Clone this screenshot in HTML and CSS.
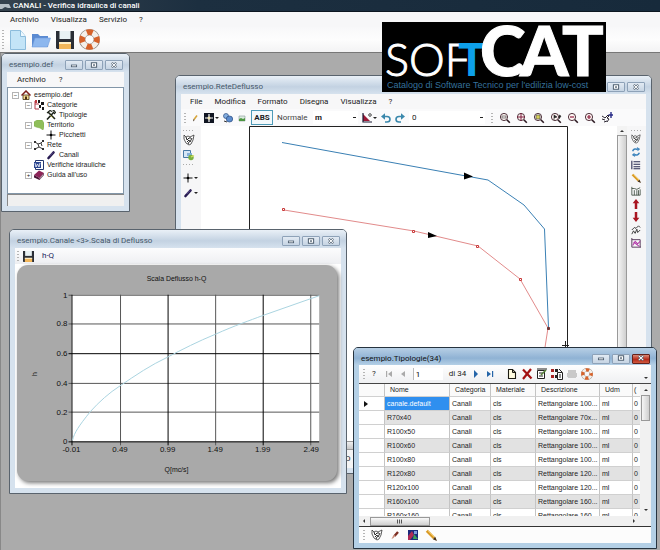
FILE: index.html
```html
<!DOCTYPE html>
<html lang="it">
<head>
<meta charset="utf-8">
<title>CANALI - Verifica idraulica di canali</title>
<link rel="stylesheet" href="styles.css">
</head>
<body>
<svg class="defs" aria-hidden="true">
  <symbol id="min" viewBox="0 0 18 10"><rect x="6" y="5" width="6" height="2" fill="#fff" stroke="#3d4f61" stroke-width=".8"/></symbol>
  <symbol id="max" viewBox="0 0 18 10"><rect x="6" y="2.500" width="6" height="5" fill="#fff" stroke="#3d4f61"/><rect x="8" y="4.300" width="2" height="1.500" fill="#3d4f61"/></symbol>
  <symbol id="cls" viewBox="0 0 18 10"><path d="M6.500 2.500l5 5M11.500 2.500l-5 5" stroke="#3d4f61" stroke-width="2.600"/><path d="M6.500 2.500l5 5M11.500 2.500l-5 5" stroke="#fff" stroke-width="1.200"/></symbol>
  <symbol id="page" viewBox="0 0 16 20"><path d="M.5.5h10l5 6v13H.5z" fill="#c3e4f7" stroke="#8cbcdc"/><path d="M10.500.5v6h5" fill="#eef9ff" stroke="#8cbcdc"/></symbol>
  <symbol id="folder" viewBox="0 0 20 16"><path d="M1 15V2h6l2 2h8v11z" fill="#5b8bd2"/><path d="M1 15L4 6h15.500l-3 9z" fill="#8db7ee" stroke="#6f9bdb" stroke-width=".6"/></symbol>
  <symbol id="disk" viewBox="0 0 18 18"><path d="M0 0h18v18H1L0 17z" fill="#2b2e35"/><path d="M3.500 0h11v8h-11z" fill="#e8f1f3"/><path d="M3 12h12v6H3z" fill="#f2b65a"/><path d="M3 11h12v2H3z" fill="#fff0c8"/></symbol>
  <symbol id="ring" viewBox="0 0 20 20"><circle cx="10" cy="10" r="7" fill="none" stroke="#8a7f78" stroke-width="6"/><circle cx="10" cy="10" r="7" fill="none" stroke="#f4efe9" stroke-width="5"/><circle cx="10" cy="10" r="7" fill="none" stroke="#d6622a" stroke-width="5.500" stroke-dasharray="5.500 5.500" stroke-dashoffset="2.750"/></symbol>
  <symbol id="house" viewBox="0 0 10 10"><path d="M2 5h6v4.500H2z" fill="#f5d98e" stroke="#453614" stroke-width=".8"/><path d="M.5 5.500L5 1l4.500 4.500" fill="none" stroke="#7b1f18" stroke-width="1.500"/><path d="M4 6.500h2v3H4z" fill="#4c3112"/></symbol>
  <symbol id="cat" viewBox="0 0 10 10"><path d="M1 1v8h4M1 4h4" stroke="#b03a48" fill="none"/><path d="M4 0h2v3H4zM7 2h3v3H7zM5 5h2v3H5zM8 7h2v3H8z" fill="#1b1b1b"/><path d="M1 0h2v3H1z" fill="#c03a40"/></symbol>
  <symbol id="tools" viewBox="0 0 10 10"><path d="M1 9.500L8 2M2 2l7 7" stroke="#1d241a" stroke-width="1.600"/><path d="M1 3l3-2.500 2 1M6.500 1l1.500-.5 1.500 2L8 4" fill="none" stroke="#1d241a" stroke-width="1.200"/><path d="M4 5l3 3" stroke="#b9b24c" stroke-width=".8"/></symbol>
  <symbol id="land" viewBox="0 0 10 10"><path d="M0 2l3-2h5l2 3v4l-1 3-3-2-4-1L0 6z" fill="#8fbe5a" stroke="#78a845" stroke-width=".5"/></symbol>
  <symbol id="cross" viewBox="0 0 10 10"><path d="M5 .5v9M.5 5h9" stroke="#111" stroke-width="1"/><circle cx="5" cy="5" r="1.300"/></symbol>
  <symbol id="net" viewBox="0 0 10 10"><path d="M1 2l3 2 3-1 2-2M4 4l1 3-4 2M5 7l4 2M7 3l1 3" fill="none" stroke="#222" stroke-width=".9"/><path d="M0 1h2v2H0zM8 0h2v2H8zM0 8h2v2H0zM8 8h2v2H8z" fill="#333"/></symbol>
  <symbol id="pen" viewBox="0 0 10 10"><path d="M2.500 8L7.500 2.500" stroke="#261a50" stroke-width="2.600" stroke-linecap="round"/><path d="M3.500 6L7 2.500" stroke="#8476b6" stroke-width=".7"/></symbol>
  <symbol id="word" viewBox="0 0 10 10"><path d="M1.500.5h8v9h-8z" fill="#fff" stroke="#24376e"/><path d="M0 2h7v6H0z" fill="#2c4691"/><path d="M1 3l1 4 1.500-3L5 7l1-4" fill="none" stroke="#fff" stroke-width=".8"/></symbol>
  <symbol id="book" viewBox="0 0 10 10"><path d="M0 5l5-4.500L10 3 5.500 8z" fill="#8d2458"/><path d="M0 5v2.500L5.500 10 10 5V3L5.500 8z" fill="#4b1334"/><path d="M5.500 9L9.500 4.500" stroke="#eee" stroke-width=".7"/></symbol>
  <symbol id="pencil" viewBox="0 0 10 10"><path d="M1.500 1.500l6 6" stroke="#d99a25" stroke-width="2.400"/><path d="M2.500 1.500l5.500 5.500" stroke="#ffe08a" stroke-width=".6"/><path d="M6.500 8.500l2-2L10 10z" fill="#473014"/></symbol>
  <symbol id="pencil2" viewBox="0 0 10 10"><path d="M7 2.500L4 6.500" stroke="#d7a63c" stroke-width="1.600"/><path d="M3.500 6l1.200 1L3 8.500z" fill="#443019"/></symbol>
  <symbol id="spark" viewBox="0 0 10 10"><path d="M0 0h10v10H0z" fill="#101522"/><path d="M5 1v8M1 5h8" stroke="#fff" stroke-width="1.200"/><circle cx="5" cy="5" r="1.500" fill="#f4e9b5"/></symbol>
  <symbol id="db" viewBox="0 0 10 10"><circle cx="3" cy="3" r="2.500" fill="#85afe0" stroke="#294a80" stroke-width=".7"/><ellipse cx="6.500" cy="6" rx="3.200" ry="3" fill="#5c8ccd" stroke="#294a80" stroke-width=".7"/><path d="M1 8l3 1" stroke="#333"/></symbol>
  <symbol id="pic" viewBox="0 0 10 10"><path d="M2 3h6v5H2z" fill="#dcebe0" stroke="#899" stroke-width=".6"/><path d="M2 8V6l2-1 2 1 2-1v3z" fill="#4d9642"/></symbol>
  <symbol id="angle" viewBox="0 0 10 10"><path d="M1 1l7 7H1z" fill="#9c1836"/><path d="M1 0v9h9" fill="none" stroke="#191933" stroke-width="1.200"/><circle cx="8" cy="2" r="1.300" fill="none" stroke="#222" stroke-width=".8"/></symbol>
  <symbol id="undo" viewBox="0 0 10 10"><path d="M2 3.500h4c4 0 4 5.500 0 5.500H4" fill="none" stroke="#3a88ac" stroke-width="1.600"/><path d="M0 3.500L4 .3v6.400z" fill="#3a88ac"/></symbol>
  <symbol id="redo" viewBox="0 0 10 10"><path d="M8 3.500H4c-4 0-4 5.500 0 5.500h2" fill="none" stroke="#3a88ac" stroke-width="1.600"/><path d="M10 3.500L6 .3v6.400z" fill="#3a88ac"/></symbol>
  <symbol id="lens" viewBox="0 0 12 12"><circle cx="5" cy="5" r="3.600" fill="#fff6f4" stroke="#3c1d27" stroke-width=".9"/><path d="M7.800 7.800l3 3" stroke="#2b1820" stroke-width="1.600"/></symbol>
  <symbol id="hand" viewBox="0 0 12 12"><path d="M1 4l3 2M1 7l3 1M3 10l3-1M4 6l3-3 1 1-2 2 2 1-2 3" fill="none" stroke="#2a2430"/><path d="M10 0v6M7.500 3h4.500" stroke="#272a86" stroke-width="1.400"/></symbol>
  <symbol id="mask" viewBox="0 0 12 12"><path d="M1 1l2 2 2-1 2 1 4-2-1 5-2 4-2 1-3-2-2-4z" fill="#fff" stroke="#333" stroke-width=".8"/><path d="M3 3l1 3 2-2M4 8l2-2 1 2 2-4M7 3v2M5 10l1-2" fill="none" stroke="#111" stroke-width=".9"/></symbol>
  <symbol id="export" viewBox="0 0 12 12"><path d="M.5 1.500h7v7h-7z" fill="#d6e7f6" stroke="#487aa6"/><path d="M4 4h5v3H4z" fill="#83b1da"/><circle cx="8" cy="8.500" r="2.700" fill="#7ab040"/><path d="M8 8l3-1.500" stroke="#d7e05d" stroke-width="1.300"/></symbol>
  <symbol id="refresh" viewBox="0 0 12 12"><path d="M2 5c1-3 4-3 6-2M10 7c-1 3-4 3-6 2" fill="none" stroke="#3d84bd" stroke-width="1.800"/><path d="M7 0l4 2.500L8 5zM5 12L1 9.500 4 7z" fill="#3d84bd"/></symbol>
  <symbol id="list" viewBox="0 0 12 12"><path d="M1 1v10M3 2h8M3 5h8M3 8h8M3 10.500h8" stroke="#262a50" stroke-width="1.300"/></symbol>
  <symbol id="bars" viewBox="0 0 12 12"><path d="M1 1v10h10V4M1 3h3l3 1 4-2M4 5v6M7 5v6M9 5v6" fill="none" stroke="#2b3d2d" stroke-width=".9"/></symbol>
  <symbol id="up" viewBox="0 0 12 12"><path d="M6 0l4 5H7.500v7h-3V5H2z" fill="#a91520"/></symbol>
  <symbol id="down" viewBox="0 0 12 12"><path d="M6 12l4-5H7.500V0h-3v7H2z" fill="#a91520"/></symbol>
  <symbol id="zig" viewBox="0 0 12 12"><path d="M1 11l2-4 2 3 2-5 1 4 3-3M1 6l3-3 2 1 3-3 2 2" fill="none" stroke="#222"/></symbol>
  <symbol id="plot" viewBox="0 0 12 12"><path d="M1 0v11h11M1 2h10v9" fill="none" stroke="#3e2143"/><path d="M2 9l3-5 3 3 3-3M3 5l7 5" fill="none" stroke="#b23aa9" stroke-width="1.300"/></symbol>
  <symbol id="first" viewBox="0 0 8 8"><path d="M1 1h1.200v6H1zM7 1v6L3 4z"/></symbol>
  <symbol id="prev" viewBox="0 0 8 8"><path d="M6 1v6L2 4z"/></symbol>
  <symbol id="next" viewBox="0 0 8 8"><path d="M2 0v8l4-4z"/></symbol>
  <symbol id="last" viewBox="0 0 8 8"><path d="M1 1v6l4-3zM6 1h1.200v6H6z"/></symbol>
  <symbol id="new" viewBox="0 0 12 12"><path d="M2.500 1.500h4l3 3v6h-7z" fill="#fffce0" stroke="#1b1b12" stroke-width="1.100"/><path d="M6.500 1.500v3h3" fill="none" stroke="#1b1b12"/></symbol>
  <symbol id="del" viewBox="0 0 12 12"><path d="M2 1.500l8.500 9M10 1L2 11" stroke="#a31212" stroke-width="2.200"/></symbol>
  <symbol id="form" viewBox="0 0 12 12"><path d="M1.500 2.500h7v8h-7z" fill="#fff" stroke="#222"/><path d="M3 5h4M3 8h4M1 1h10" stroke="#222"/><path d="M5 7l5-5" stroke="#56803a" stroke-width="1.600"/></symbol>
  <symbol id="copy" viewBox="0 0 12 12"><path d="M0 1h3v3H0zM0 7h3v3H0z" fill="#a62222"/><path d="M4 1h3v3H4zM4 7h2v3H4z" fill="#222"/><path d="M6.500 4.500h5v7h-5z" fill="#fff" stroke="#222"/><path d="M8 1l3 3M8 7h2M8 9h2" stroke="#222"/></symbol>
  <symbol id="print" viewBox="0 0 12 12"><path d="M2 2h8v8H2zM1 5h10v4H1z" fill="#c9c9c9"/></symbol>
  <symbol id="brush" viewBox="0 0 12 12"><path d="M9 3L5.500 7" stroke="#7c2d22" stroke-width="2.400"/><path d="M6.500 6.500L4.500 9 2.500 10 4.500 6z" fill="#c98c79"/></symbol>
  <symbol id="mosaic" viewBox="0 0 12 12"><path d="M1 1h10v10H1z" fill="#1c2a7c"/><path d="M1 7l4-5 2 4-4 5H1z" fill="#b02a55"/><path d="M7 5l4 5H6z" fill="#3ca05a"/><path d="M7 2h3v3H7z" fill="#7f9ade"/></symbol>
</svg>

<div class="app">
  <header class="apptitle">
    <svg width="11" height="8" viewBox="0 0 11 8"><path d="M0 2h9l2 4H8L5 5 2 7H0z" fill="#b6bfc6"/></svg>
    <span>CANALI - Verifica idraulica di canali</span>
  </header>
  <nav class="menu appmenu"><a href="#">Archivio</a><a href="#">Visualizza</a><a href="#">Servizio</a><a href="#">?</a></nav>
  <div class="apptools">
    <i class="grip"></i>
    <button aria-label="Nuovo"><svg width="16" height="20"><use href="#page"/></svg></button>
    <button aria-label="Apri"><svg width="20" height="16"><use href="#folder"/></svg></button>
    <button aria-label="Salva"><svg width="18" height="18"><use href="#disk"/></svg></button>
    <button aria-label="Guida"><svg width="21" height="21"><use href="#ring"/></svg></button>
  </div>

  <main class="desktop">
    <section class="win w-net">
      <div class="bar"><h2>esempio.ReteDeflusso</h2><div class="ctl"><button aria-label="Riduci"><svg><use href="#min"/></svg></button><button aria-label="Ingrandisci"><svg><use href="#max"/></svg></button><button aria-label="Chiudi"><svg><use href="#cls"/></svg></button></div></div>
      <div class="inner">
        <nav class="menu netmenu"><a href="#">File</a><a href="#">Modifica</a><a href="#">Formato</a><a href="#">Disegna</a><a href="#">Visualizza</a><a href="#">?</a></nav>
        <div class="nettools">
          <i class="grip"></i>
          <button aria-label="Matita"><svg class="i10"><use href="#pencil2"/></svg></button>
          <button class="drop" aria-label="Punto"><svg class="i10"><use href="#spark"/></svg></button>
          <button aria-label="Dati"><svg class="i10"><use href="#db"/></svg></button>
          <button aria-label="Immagine"><svg class="i10"><use href="#pic"/></svg></button>
          <button class="abs">ABS</button>
          <span class="lbl">Normale</span>
          <select class="unit" aria-label="Unità"><option>m</option></select>
          <button class="drop" aria-label="Angolo"><svg class="i10"><use href="#angle"/></svg></button>
          <button aria-label="Annulla"><svg class="i10"><use href="#undo"/></svg></button>
          <button aria-label="Ripeti"><svg class="i10"><use href="#redo"/></svg></button>
          <select class="zero" aria-label="Livello"><option>0</option></select>
          <i class="grip"></i>
          <span class="lenses">
          <button aria-label="Zoom finestra"><svg class="i12" viewBox="0 0 12 12"><use href="#lens"/><path d="M3 4h4v2H3z" fill="none" stroke="#555" stroke-width=".7"/></svg></button>
          <button aria-label="Zoom tutto"><svg class="i12" viewBox="0 0 12 12"><use href="#lens"/><path d="M5 1v8M1 5h8" stroke="#7c1c3c"/></svg></button>
          <button aria-label="Zoom selezione"><svg class="i12" viewBox="0 0 12 12"><use href="#lens"/><path d="M3 3h4v4H3z" fill="#d7cf55" stroke="#555" stroke-width=".7"/></svg></button>
          <button aria-label="Zoom precedente"><svg class="i12" viewBox="0 0 12 12"><use href="#lens"/><path d="M4 8V3l3 2-3 1M9 3l2 1-2 3" fill="#222" stroke="#222" stroke-width=".6"/></svg></button>
          <button aria-label="Riduci zoom"><svg class="i12" viewBox="0 0 12 12"><use href="#lens"/><path d="M3 5h4" stroke="#8c1c3c" stroke-width="1.200"/></svg></button>
          <button aria-label="Aumenta zoom"><svg class="i12" viewBox="0 0 12 12"><use href="#lens"/><path d="M3 5h4M5 3v4" stroke="#8c1c3c" stroke-width="1.200"/></svg></button>
          <button aria-label="Sposta"><svg class="i12"><use href="#hand"/></svg></button>
          </span>
        </div>
        <div class="netbody">
          <div class="side left">
            <i class="hgrip"></i>
            <button aria-label="Proprietà"><svg class="i12"><use href="#mask"/></svg></button>
            <button aria-label="Esporta"><svg class="i12"><use href="#export"/></svg></button>
            <i class="hgrip"></i><i class="hgap"></i>
            <button class="drop" aria-label="Picchetto"><svg class="i10"><use href="#cross"/></svg></button>
            <button class="drop" aria-label="Canale"><svg class="i10"><use href="#pen"/></svg></button>
          </div>
          <div class="canvas">
            <svg width="415" height="320" viewBox="201 126 415 320">
              <path d="M249.500 446V126.500H567.500V446" fill="none" stroke="#222"/>
              <path d="M282 142.500L488 180 524 205 544.500 229 548.500 328" fill="none" stroke="#3a80b4"/>
              <path d="M284 210L414 231 478 246 520 279 548 328 543 360" fill="none" stroke="#e28b8b"/>
              <g fill="#fff" stroke="#c93a3a"><path d="M282.500 208.500h2v2h-2zM412.500 230.500h2v2h-2zM476.500 245.500h2v2h-2zM519.500 278.500h2v2h-2z"/><path d="M547.500 327.500h2v2h-2z" fill="#544" stroke="#733"/></g>
              <path d="M464 172.500l9 4-9 3zM428 232l9 4-9 2z"/>
              <path d="M562 345.500h7M565.500 341v8" stroke="#222"/>
            </svg>
          </div>
          <div class="vscroll"><b class="tri u"></b><i class="thumb"></i></div>
          <div class="side right">
            <i class="hgrip"></i>
            <button aria-label="Proprietà"><svg><use href="#mask"/></svg></button>
            <button aria-label="Aggiorna"><svg><use href="#refresh"/></svg></button>
            <button aria-label="Elenco"><svg><use href="#list"/></svg></button>
            <button aria-label="Modifica"><svg><use href="#pencil"/></svg></button>
            <button aria-label="Profilo"><svg><use href="#bars"/></svg></button>
            <button aria-label="Su"><svg><use href="#up"/></svg></button>
            <button aria-label="Giù"><svg><use href="#down"/></svg></button>
            <button aria-label="Sezioni"><svg><use href="#zig"/></svg></button>
            <button aria-label="Grafico"><svg><use href="#plot"/></svg></button>
          </div>
        </div>
        <div class="netscroll"></div>
        <div class="netstatus"><span>O</span></div>
      </div>
    </section>

    <section class="win w-def">
      <div class="bar"><h2>esempio.def</h2><div class="ctl"><button aria-label="Riduci"><svg><use href="#min"/></svg></button><button aria-label="Ingrandisci"><svg><use href="#max"/></svg></button><button aria-label="Chiudi"><svg><use href="#cls"/></svg></button></div></div>
      <div class="inner">
        <nav class="menu defmenu"><a href="#">Archivio</a><a href="#">?</a></nav>
        <ul class="tree">
          <li><i class="exp">−</i><svg class="i10"><use href="#house"/></svg>esempio.def</li>
          <li class="l1"><i class="exp">−</i><svg class="i10"><use href="#cat"/></svg>Categorie</li>
          <li class="l2"><svg class="i10"><use href="#tools"/></svg>Tipologie</li>
          <li class="l1"><i class="exp">−</i><svg class="i10"><use href="#land"/></svg>Territorio</li>
          <li class="l2"><svg class="i10"><use href="#cross"/></svg>Picchetti</li>
          <li class="l1"><i class="exp">−</i><svg class="i10"><use href="#net"/></svg>Rete</li>
          <li class="l2"><svg class="i10"><use href="#pen"/></svg>Canali</li>
          <li class="l1 leaf"><svg class="i10"><use href="#word"/></svg>Verifiche idrauliche</li>
          <li class="l1"><i class="exp">+</i><svg class="i10"><use href="#book"/></svg>Guida all'uso</li>
        </ul>
        <div class="status"></div>
      </div>
    </section>

    <section class="win w-chart">
      <div class="bar"><h2>esempio.Canale &lt;3&gt;.Scala di Deflusso</h2><div class="ctl"><button aria-label="Riduci"><svg><use href="#min"/></svg></button><button aria-label="Ingrandisci"><svg><use href="#max"/></svg></button><button aria-label="Chiudi"><svg><use href="#cls"/></svg></button></div></div>
      <div class="inner">
        <div class="charttools"><i class="grip"></i><button aria-label="Salva"><svg width="11" height="11"><use href="#disk"/></svg></button><button class="hq">h-Q</button></div>
        <div class="panel">
          <svg viewBox="17 265 319 218" role="img" aria-label="Scala Deflusso h-Q">
            <path d="M70 295h250v148H70z" fill="#fff"/>
            <path d="M119.500 295v152M215.500 295v152M311.500 295v152M67 324.500h253M67 384.500h253M67 413.500h253M67 295.500h253" stroke="#555"/>
            <path d="M70.500 295v152M167.500 295v152M263.500 295v152M67 354.500h253M67 443.500h253" stroke="#000"/>
            <path d="M71 442C73 434 77 428 89 413C98 403 108 394 119 387C135 376 150 366 167 358C182 350 198 342 215 335C235 326 250 321 263 316L320 296" fill="none" stroke="#a9d3e0"/>
            <text x="176" y="281" text-anchor="middle">Scala Deflusso h-Q</text>
            <text x="176" y="474" text-anchor="middle">Q[mc/s]</text>
            <text transform="translate(35 375) rotate(-90)" text-anchor="middle">h</text>
            <g class="num" text-anchor="end"><text x="66" y="298">1</text><text x="66" y="327">0.8</text><text x="66" y="357">0.6</text><text x="66" y="387">0.4</text><text x="66" y="416">0.2</text><text x="66" y="446">0</text></g>
            <g class="num" text-anchor="middle"><text x="70" y="454">-0.01</text><text x="119" y="454">0.49</text><text x="167" y="454">0.99</text><text x="215" y="454">1.49</text><text x="263" y="454">1.99</text><text x="312" y="454">2.49</text></g>
          </svg>
        </div>
      </div>
    </section>

    <section class="win w-tip active">
      <div class="bar"><h2>esempio.Tipologie(34)</h2><div class="ctl"><button aria-label="Riduci"><svg><use href="#min"/></svg></button><button aria-label="Ingrandisci"><svg><use href="#max"/></svg></button><button class="red" aria-label="Chiudi"><svg><use href="#cls"/></svg></button></div></div>
      <div class="inner">
        <div class="tiptools">
          <i class="grip"></i><button class="q">?</button>
          <button class="off" aria-label="Primo"><svg class="i8"><use href="#first"/></svg></button>
          <button class="off" aria-label="Precedente"><svg class="i8"><use href="#prev"/></svg></button>
          <input type="text" value="1" aria-label="Posizione"><span>di 34</span>
          <button class="on" aria-label="Successivo"><svg class="i8"><use href="#next"/></svg></button>
          <button class="on" aria-label="Ultimo"><svg class="i8"><use href="#last"/></svg></button>
          <span class="acts">
          <button aria-label="Nuovo"><svg class="i12"><use href="#new"/></svg></button>
          <button aria-label="Elimina"><svg class="i12"><use href="#del"/></svg></button>
          <button aria-label="Modifica"><svg class="i12"><use href="#form"/></svg></button>
          <button aria-label="Copia"><svg class="i12"><use href="#copy"/></svg></button>
          <button aria-label="Stampa"><svg class="i12"><use href="#print"/></svg></button>
          <button aria-label="Guida"><svg class="i12"><use href="#ring"/></svg></button>
          </span>
          <b class="tri d more"></b>
        </div>
        <div class="gridbox">
          <div class="tablewrap">
          <table>
            <colgroup><col class="c0"><col class="c1"><col class="c2"><col class="c3"><col class="c4"><col class="c5"><col></colgroup>
            <thead><tr><th></th><th>Nome</th><th>Categoria</th><th>Materiale</th><th>Descrizione</th><th>Udm</th><th>(</th></tr></thead>
            <tbody>
              <tr><td><b class="tri r"></b></td><td class="sel">canale.default</td><td>Canali</td><td>cls</td><td>Rettangolare 100...</td><td>ml</td><td>0</td></tr>
              <tr><td></td><td>R70x40</td><td>Canali</td><td>cls</td><td>Rettangolare 70x...</td><td>ml</td><td>0</td></tr>
              <tr><td></td><td>R100x50</td><td>Canali</td><td>cls</td><td>Rettangolare 100...</td><td>ml</td><td>0</td></tr>
              <tr><td></td><td>R100x60</td><td>Canali</td><td>cls</td><td>Rettangolare 100...</td><td>ml</td><td>0</td></tr>
              <tr><td></td><td>R100x80</td><td>Canali</td><td>cls</td><td>Rettangolare 100...</td><td>ml</td><td>0</td></tr>
              <tr><td></td><td>R120x80</td><td>Canali</td><td>cls</td><td>Rettangolare 120...</td><td>ml</td><td>0</td></tr>
              <tr><td></td><td>R120x100</td><td>Canali</td><td>cls</td><td>Rettangolare 120...</td><td>ml</td><td>0</td></tr>
              <tr><td></td><td>R160x100</td><td>Canali</td><td>cls</td><td>Rettangolare 160...</td><td>ml</td><td>0</td></tr>
              <tr><td></td><td>R160x160</td><td>Canali</td><td>cls</td><td>Rettangolare 160...</td><td>ml</td><td>0</td></tr>
            </tbody>
          </table>
          </div>
          <div class="gv"><b class="tri u"></b><i class="thumb"></i><b class="tri d"></b></div>
        </div>
        <div class="gh"><b class="tri l"></b><i class="thumb"><svg viewBox="0 0 58 7"><path d="M26.500 1.500v4M28.500 1.500v4M30.500 1.500v4" stroke="#555"/></svg></i><b class="tri r"></b></div>
        <div class="foot"><i class="grip"></i>
          <button aria-label="Proprietà"><svg class="i12"><use href="#mask"/></svg></button>
          <button aria-label="Pennello"><svg class="i12"><use href="#brush"/></svg></button>
          <button aria-label="Colori"><svg class="i12"><use href="#mosaic"/></svg></button>
          <button aria-label="Matita"><svg class="i12"><use href="#pencil"/></svg></button>
        </div>
      </div>
    </section>
  </main>

  <aside class="logo">
    <svg viewBox="0 0 224 70" role="img" aria-label="SOFTCAT">
      <text class="thin" x="3" y="54">SOF</text>
      <text class="blue" x="76" y="54">T</text>
      <text class="fat" x="98" y="54">C</text>
      <text class="fat" x="138" y="54">A</text>
      <text class="fat" x="180" y="54">T</text>
    </svg>
    <p>Catalogo di Software Tecnico per l'edilizia low-cost</p>
  </aside>
</div>
</body>
</html>
```
FILE: styles.css
```css
* { box-sizing: border-box; }
body {
  margin: 0;
  font: 8px/10px Roboto, "Open Sans", sans-serif;
  color: #1c1c1c;
  background: #ababab;
}
.defs { position: absolute; width: 0; height: 0; }
button { border: 0; padding: 0; margin: 0; background: none; font: inherit; color: inherit; display: flex; align-items: center; flex: none; }
svg { display: block; }
a { color: inherit; text-decoration: none; }
h2 { margin: 0; font-size: 8px; font-weight: 400; white-space: nowrap; }
.i8 { width: 8px; height: 8px; }
.i10 { width: 10px; height: 10px; }
.i12 { width: 12px; height: 12px; }

.app { position: relative; min-height: 100vh; display: flex; flex-direction: column; overflow: hidden; }
.apptitle {
  display: flex; align-items: center; gap: 2px; height: 12px;
  background: linear-gradient(90deg, #35424e, #1c2f40 30%, #172a3b);
  border-bottom: 1px solid #0d1721;
  color: #fff; font-weight: 500;
}
.menu { display: flex; align-items: center; background: #f7f7f8; }
.appmenu { height: 15px; padding-left: 10px; gap: 12px; }
.apptools {
  display: flex; align-items: center; gap: 5px; height: 26px; padding-left: 2px;
  background: linear-gradient(#f8f8f9, #fdfdfd 50%, #f3f3f4);
  border-bottom: 1px solid #777;
}
.apptools .grip { height: 20px; margin-right: 1px; }
.grip { width: 2px; height: 10px; flex: none; background: repeating-linear-gradient(#b5b5b5 0 1px, transparent 1px 3px); }
.hgrip { width: 12px; height: 1px; background: repeating-linear-gradient(90deg, #aaa 0 1px, transparent 1px 3px); }
.desktop { flex: 1; background: #ababab; border-left: 1px solid #888; }

.win {
  position: absolute; display: flex; flex-direction: column;
  background: #d6e2ee; border: 1px solid #59636d;
  border-radius: 5px 5px 0 0; padding: 0 5px 5px;
}
.active { background: #b4d0e6; border-color: #26333f; }
.bar {
  display: flex; align-items: center; justify-content: space-between;
  height: 18px; margin: 0 -5px; padding: 4px 6px 0 7px; flex: none;
  background: linear-gradient(#e9f0f7, #c3d2e2 60%, #d6e2ee);
  border-radius: 4px 4px 0 0; color: #46586a;
}
.active .bar { height: 17px; background: linear-gradient(#b7cfe5, #8fb2d4 60%, #b4d0e6); color: #111; }
.ctl { display: flex; gap: 2px; }
.ctl button { width: 18px; height: 10px; border: 1px solid #8ea2b8; border-radius: 1px; background: linear-gradient(#e2eaf3, #c6d4e3); }
.ctl svg { width: 100%; height: 10px; margin-top: -1px; }
.ctl .red { background: linear-gradient(#dc8a78, #b62a1a 55%, #d05a40); border-color: #64221c; }
.inner { flex: 1; display: flex; flex-direction: column; min-height: 0; background: #fff; }

.w-def { left: 1px; top: 53px; width: 129px; height: 159px; }
.w-net { left: 175px; top: 75px; width: 477px; height: 399px; }
.w-chart { left: 9px; top: 229px; width: 338px; height: 265px; }
.w-tip { left: 353px; top: 347px; width: 304px; height: 202px; }

.defmenu { height: 15px; gap: 13px; padding-left: 10px; }
.tree { list-style: none; margin: 0; padding: 2px 0 0 4px; flex: 1; border: 1px solid #8296a8; background: #fff; font: 7px/10px "Liberation Sans", sans-serif; }
.tree li { display: flex; align-items: center; gap: 2px; height: 10px; white-space: nowrap; }
.tree li svg { margin-right: 1px; flex: none; }
.tree .l1 { padding-left: 13px; }
.tree .l2 { padding-left: 34px; }
.tree .leaf { padding-left: 22px; }
.exp { width: 7px; height: 7px; border: 1px solid #b4b4b4; font: 6px/5px "Liberation Sans", sans-serif; text-align: center; flex: none; }
.status { height: 12px; border: 1px solid #888; border-width: 1px 0 0 1px; background: #f0f0f0; }

.netmenu { height: 15px; gap: 12px; padding-left: 9px; }
.nettools { display: flex; align-items: center; gap: 4px; height: 17px; padding-left: 3px; background: #fafafb; }
.nettools > *, .lenses { flex: none; }
.drop::after { content: ""; border: 2px solid transparent; border-top-color: #222; border-bottom: 0; margin-left: 1px; }
.abs { width: 22px; height: 15px; border: 1px solid #4e9bb8; background: #f2f9fc; justify-content: center; font-weight: 700; }
.lbl { width: 32px; color: #444; }
select { appearance: none; border: 0; border-radius: 0; padding: 0; font: inherit; color: inherit; height: 13px; background: linear-gradient(#222, #222) right 2px top 6px / 3px 1px no-repeat, #fff; }
.unit { width: 45px; padding-left: 2px; font-weight: 700; }
.zero { width: 76px; padding-left: 3px; margin-right: 2px; }
.lenses { display: flex; gap: 5px; padding-left: 2px; }
.netbody { flex: 1; display: flex; min-height: 0; }
.side { display: flex; flex-direction: column; background: #f6f6f7; flex: none; }
.left { width: 20px; padding: 4px 0 0 2px; gap: 3px; }
.left .drop { height: 12px; }
.hgap { height: 1px; }
.right { width: 19px; padding: 4px 0 0 4px; gap: 3px; }
.right svg { width: 10px; height: 10px; }
.canvas { flex: 1; min-width: 0; overflow: hidden; background: #fff; }
.vscroll { width: 10px; display: flex; flex-direction: column; align-items: center; padding-top: 4px; gap: 3px; background: #f3f3f3; }
.thumb { border: 1px solid #999; background: linear-gradient(90deg, #f5f5f5, #cfcfcf); }
.vscroll .thumb { width: 10px; flex: 1; }
.tri { display: block; width: 0; height: 0; border: 2px solid transparent; flex: none; }
.tri.u { border-bottom-color: #333; border-top: 0; }
.tri.d { border-top-color: #333; border-bottom: 0; }
.tri.l { border-right-color: #333; border-left: 0; }
.tri.r { border-left-color: #333; border-right: 0; }
td .tri.r { border-width: 3px 0 3px 4px; border-left-color: #111; }
.netscroll { height: 9px; border: 1px solid #999; background: linear-gradient(#eee, #c8c8c8); }
.netstatus { height: 18px; padding: 4px 0 0 164px; background: #f4f4f4; }

.charttools { display: flex; align-items: center; height: 16px; padding-left: 2px; gap: 4px; background: linear-gradient(#fcfcfd, #eeeff2); }
.hq { color: #24245c; margin-left: 4px; }
.panel { margin: 1px 4px 7px 2px; background: #a9a9a9; border-radius: 11px; box-shadow: 2px 2px 4px #777; flex: 1; min-height: 0; }
.panel svg { width: 100%; height: 100%; }
.panel text { font: 7px "Liberation Sans", sans-serif; fill: #111; }
.panel .num text { font-size: 8px; }

.tiptools { display: flex; align-items: center; height: 18px; padding-left: 4px; gap: 6px; background: linear-gradient(#fefefe, #eff0f2); }
.tiptools .q { margin: 0 3px 0 1px; }
.off { fill: #aaa; }
.on { fill: #2565a8; }
.tiptools input { width: 30px; height: 12px; border: 0; border-left: 1px solid #bbb; padding: 0 0 0 2px; font: inherit; background: #fff; }
.tiptools > span { white-space: nowrap; }
.acts { display: flex; gap: 3px; padding-left: 6px; }
.more { margin: 8px 3px 0 auto; }
.gridbox { display: flex; flex: 1; min-height: 0; border-top: 1px solid #444; }
.tablewrap { flex: 1; min-width: 0; overflow: hidden; }
table { width: 100%; table-layout: fixed; border-collapse: separate; border-spacing: 0; font: 7px/10px "Liberation Sans", sans-serif; }
.c0 { width: 26px; } .c1 { width: 65px; } .c2 { width: 41px; } .c3 { width: 45px; } .c4 { width: 64px; } .c5 { width: 33px; }
th, td { height: 14px; padding: 0 0 0 2px; border-right: 1px solid #c4c4c4; border-bottom: 1px solid #d0d0d0; text-align: left; font-weight: 400; white-space: nowrap; overflow: hidden; }
th { height: 13px; padding-left: 5px; background: #fafafa; }
td:first-child { padding-left: 5px; background: #fff; }
th:last-child, td:last-child { padding-left: 1px; border-right: 0; }
tbody tr:nth-child(even) { background: #e2e2e2; }
.sel { background: #2f8fef; color: #fff; }
.gv { width: 11px; display: flex; flex-direction: column; align-items: center; padding: 5px 0; gap: 4px; background: #f1f1f1; }
.gv .thumb { width: 9px; height: 26px; }
.gv .d { margin-top: auto; }
.gh { height: 11px; display: flex; align-items: center; padding: 0 16px 0 4px; gap: 5px; background: #f0f0f0; border-bottom: 1px solid #333; }
.gh .thumb { width: 60px; height: 9px; background: linear-gradient(#f8f8f8, #d0d0d0); }
.gh .r { margin-left: auto; }
.foot { display: flex; align-items: center; gap: 6px; height: 16px; padding-left: 4px; background: #fcfcfc; }

.logo { position: absolute; left: 382px; top: 22px; width: 224px; height: 70px; background: #000; }
.logo svg { width: 100%; height: 100%; }
.logo p { position: absolute; left: 5px; bottom: 2px; margin: 0; color: #35719c; font: 9px/10px "Liberation Sans", sans-serif; white-space: nowrap; }
.thin { font: 300 45px Lato, sans-serif; fill: #fff; stroke: #fff; stroke-width: 1px; }
.blue { font: 900 45px Lato, sans-serif; fill: #0da0ea; }
.fat { font: 900 69px Lato, sans-serif; fill: #fff; stroke: #fff; stroke-width: 1px; }
```
